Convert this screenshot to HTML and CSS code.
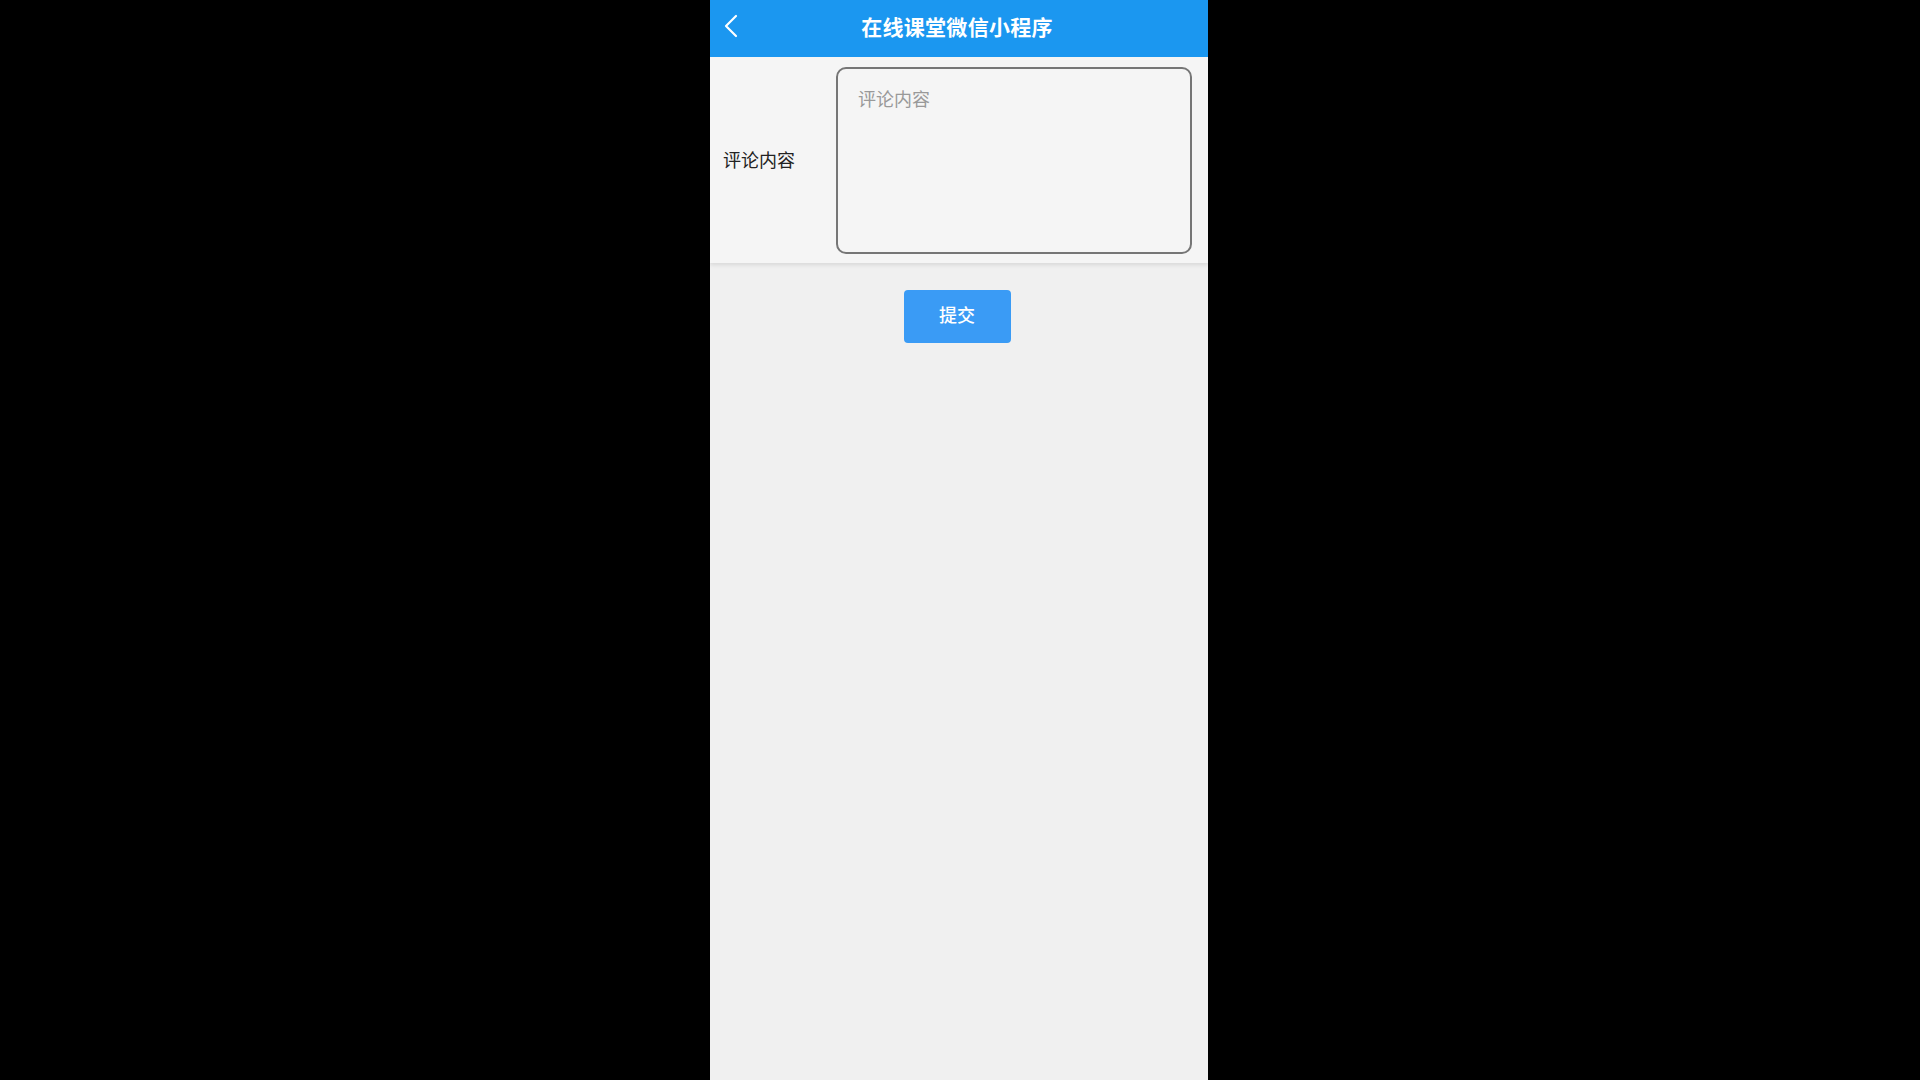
FILE: index.html
```html
<!DOCTYPE html>
<html lang="zh-CN">
<head>
    <meta charset="UTF-8">
    <meta name="viewport" content="width=device-width, initial-scale=1.0">
    <title>在线课堂微信小程序</title>
    <link rel="stylesheet" href="styles.css">
</head>
<body>

    <div class="phone">
        <div class="nav-bar">
            <span class="nav-back">
                <svg width="14" height="24" viewBox="0 0 14 24">
                    <path d="M12 2 L2 12 L12 22" fill="none" stroke="#fff" stroke-width="2.2" stroke-linecap="round" stroke-linejoin="round"/>
                </svg>
            </span>
            <h1 class="nav-title">在线课堂微信小程序</h1>
        </div>

        <form class="comment-form">
            <div class="form-row">
                <label class="form-label" for="content">评论内容</label>
                <textarea id="content" class="form-textarea" placeholder="评论内容"></textarea>
            </div>
        </form>

        <div class="actions">
            <button type="button" class="btn-submit">提交</button>
        </div>
    </div>

</body>
</html>
```

FILE: styles.css
```css
* {
    margin: 0;
    padding: 0;
    box-sizing: border-box;
}

body {
    background: #000;
    font-family: "Noto Sans CJK SC", "Noto Sans", sans-serif;
    height: 100vh;
    overflow: hidden;
}

.phone {
    width: 498px;
    height: 100vh;
    margin-left: calc(50% - 250px);
    background: #f0f0f0;
    display: flex;
    flex-direction: column;
}

.nav-bar {
    height: 57px;
    background: #1b97f0;
    display: flex;
    align-items: center;
    justify-content: center;
    padding-bottom: 6px;
    position: relative;
}

.nav-back {
    position: absolute;
    left: 14px;
    top: 14px;
    display: flex;
}

.nav-title {
    color: #fff;
    font-size: 21px;
    font-weight: 700;
    letter-spacing: 0.3px;
    margin-right: 4px;
}

.comment-form {
    background: #f5f5f5;
    box-shadow: 0 2px 4px rgba(0, 0, 0, 0.1);
}

.form-row {
    display: flex;
    align-items: center;
    padding: 10px 16px 9px 13px;
}

.form-label {
    width: 113px;
    flex-shrink: 0;
    font-size: 18px;
    color: #222;
    margin-bottom: 4px;
}

.form-textarea {
    flex: 1;
    height: 187px;
    border: 2px solid #767676;
    border-radius: 10px;
    background: #f5f5f5;
    padding: 16px 20px;
    font-family: inherit;
    font-size: 18px;
    color: #333;
    resize: none;
    outline: none;
}

.form-textarea::placeholder {
    color: #999;
}

.actions {
    display: flex;
    justify-content: center;
    padding-top: 27px;
    padding-right: 4px;
}

.btn-submit {
    width: 107px;
    height: 53px;
    border: none;
    border-radius: 4px;
    background: #3a9bf5;
    color: #fff;
    font-family: inherit;
    font-size: 18px;
    font-weight: 500;
    padding-bottom: 6px;
    cursor: pointer;
}
```
